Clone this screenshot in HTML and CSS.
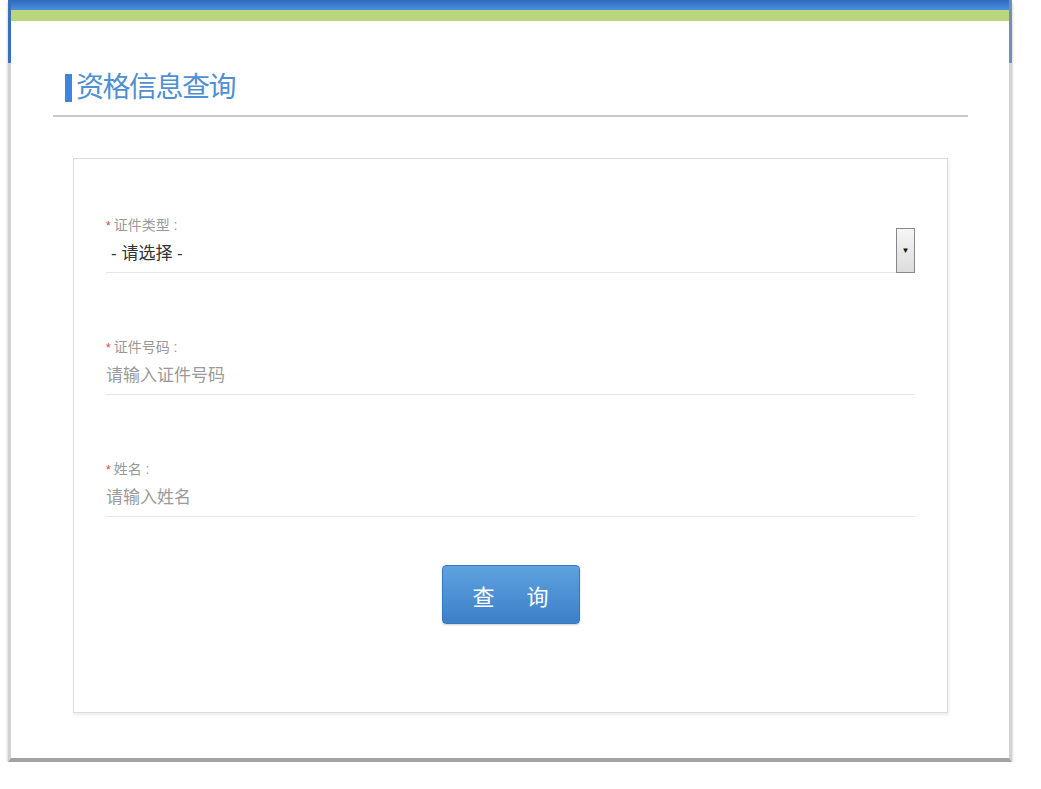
FILE: index.html
```html
<!DOCTYPE html>
<html lang="zh-CN">
<head>
    <meta charset="UTF-8">
    <meta name="viewport" content="width=device-width, initial-scale=1.0">
    <title>资格信息查询</title>
    <link rel="stylesheet" href="styles.css">
</head>
<body>
    <div class="panel">
        <div class="top-bar"></div>
        <div class="green-bar"></div>

        <h1 class="page-title"><span>资格信息查询</span></h1>

        <div class="query-box">
            <div class="field">
                <div class="field-label"><em>*</em>证件类型 :</div>
                <div class="field-value select">
                    <span class="chosen">- 请选择 -</span>
                    <span class="select-arrow">&#9660;</span>
                </div>
            </div>

            <div class="field">
                <div class="field-label"><em>*</em>证件号码 :</div>
                <div class="field-value placeholder">请输入证件号码</div>
            </div>

            <div class="field">
                <div class="field-label"><em>*</em>姓名 :</div>
                <div class="field-value placeholder">请输入姓名</div>
            </div>

            <button class="query-btn"><span>查</span><span>询</span></button>
        </div>
    </div>
</body>
</html>
```

FILE: styles.css
```css
body {
    margin: 0;
    padding: 0;
    background: #fff;
    font-family: "Liberation Sans", "Noto Sans CJK SC", sans-serif;
}
.panel {
    position: relative;
    width: 998px;
    margin-left: 8px;
    border-left: 3px solid #d2d2d2;
    border-right: 3px solid #d2d2d2;
    border-bottom: 4px solid #a3a3a3;
    background: #fff;
    padding-bottom: 45px;
    box-shadow: 0 3px 3px rgba(0, 0, 0, 0.25);
}
/* blue part of the side borders */
.panel::before,
.panel::after {
    content: "";
    position: absolute;
    top: 0;
    width: 3px;
    height: 63px;
    background: #3a6fba;
}
.panel::before {
    left: -3px;
}
.panel::after {
    right: -3px;
    background: #6f8fb8;
}
.top-bar {
    height: 10px;
    background: linear-gradient(to bottom, #2f69bd, #4a90de);
}
.green-bar {
    height: 11px;
    background: #b9d67c;
}
.page-title {
    margin: 53px 41px 0 42px;
    padding: 0 0 13px 12px;
    border-bottom: 2px solid #c9c9c9;
    font-size: 28px;
    font-weight: normal;
    line-height: 28px;
}
.page-title span {
    display: inline-block;
    border-left: 7px solid #3f86da;
    padding-left: 4px;
    color: #4f8fd2;
    letter-spacing: -1.5px;
}
.query-box {
    width: 809px;
    height: 497px;
    margin: 41px 0 0 62px;
    padding: 56px 32px 0 32px;
    border: 1px solid #dcdcdc;
    box-shadow: 1px 2px 3px rgba(0, 0, 0, 0.08);
}
.field {
    margin-bottom: 64px;
}
.field:nth-child(3) {
    margin-bottom: 48px;
}
.field-label {
    font-size: 14px;
    line-height: 20px;
    color: #999;
}
.field-label em {
    font-style: normal;
    color: #d0453c;
    font-size: 12px;
    margin-right: 3px;
}
.field-value {
    position: relative;
    height: 36px;
    line-height: 36px;
    font-size: 17px;
    border-bottom: 1px solid #e6e6e6;
}
.field-value.placeholder {
    color: #9a9a9a;
}
.chosen {
    color: #333;
    padding-left: 5px;
}
.select-arrow {
    position: absolute;
    right: 0;
    top: -8px;
    width: 17px;
    height: 43px;
    border: 1px solid #888;
    background: linear-gradient(to bottom, #f6f6f6, #dcdcdc);
    color: #111;
    font-size: 8px;
    line-height: 43px;
    text-align: center;
}
.query-btn {
    display: flex;
    justify-content: center;
    align-items: center;
    gap: 32px;
    width: 138px;
    height: 59px;
    margin: 0 auto;
    border: 1px solid #3a78be;
    border-radius: 4px;
    background: linear-gradient(to bottom, #5fa2e0, #3d7fc8);
    box-shadow: 0 1px 2px rgba(0, 0, 0, 0.2);
    color: #fff;
    font-family: "Noto Sans CJK SC", sans-serif;
    font-size: 22px;
    cursor: pointer;
}
```
